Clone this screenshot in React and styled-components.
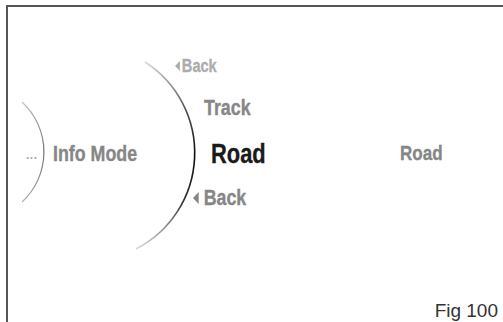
import React from 'react';
import styled, { createGlobalStyle } from 'styled-components';

const NARROW = 0.81;

const GlobalStyle = createGlobalStyle`
    html, body {
        margin: 0;
        padding: 0;
        background: #fff;
    }
`;

const Page = styled.div`
    position: relative;
    width: 503px;
    height: 322px;
    padding: 5px 0 0 6px;
    box-sizing: border-box;
    overflow: hidden;
    background: #fff;
`;

const Figure = styled.div`
    display: flex;
    flex-direction: column;
    height: 100%;
    border-top: 2px solid #555;
    border-left: 2px solid #555;
    box-sizing: border-box;
`;

const Arcs = styled.svg`
    position: absolute;
    top: 0;
    left: 0;
    pointer-events: none;
`;

const Stage = styled.div`
    display: grid;
    grid-template-columns: 27px 122px 225px auto;
    align-items: start;
    padding: 50px 0 0 18px;
`;

const Ellipsis = styled.div`
    margin-top: 92px;
    font-family: 'Liberation Sans', sans-serif;
    font-weight: 700;
    font-size: 12px;
    line-height: 1;
    letter-spacing: 0.5px;
    color: #aaa;
`;

// condensed bold face, narrowed from Liberation Sans Bold
const Label = styled.div`
    margin-top: ${p => p.top || 0}px;
    font-family: 'Liberation Sans', Arial, sans-serif;
    font-weight: 700;
    font-size: ${p => p.size}px;
    line-height: 1;
    color: ${p => p.color || '#868686'};
    -webkit-text-stroke: 0.35px currentColor;
    white-space: nowrap;
    transform: scaleX(${NARROW});
    transform-origin: left center;
`;

const Menu = styled.div`
    display: flex;
    flex-direction: column;
    align-items: flex-start;
`;

const MenuItem = styled(Label)`
    display: flex;
    align-items: center;
    gap: ${p => (p.gap || 0) / NARROW}px;
    margin-left: ${p => p.indent}px;
`;

const Arrow = styled.span`
    width: 0;
    height: 0;
    border-top: ${p => p.h / 2}px solid transparent;
    border-bottom: ${p => p.h / 2}px solid transparent;
    border-right: ${p => p.w / NARROW}px solid currentColor;
`;

const Caption = styled.div`
    margin-top: auto;
    margin-bottom: 2px;
    align-self: flex-end;
    padding-right: 5px;
    font-family: 'Liberation Sans', sans-serif;
    font-size: 19px;
    line-height: 1;
    color: #333;
`;

function ArcDrawing() {
    return (
        <Arcs width="503" height="322" viewBox="0 0 503 322">
            <defs>
                <linearGradient id="bigArc" gradientUnits="userSpaceOnUse" x1="0" y1="62" x2="0" y2="249">
                    <stop offset="0" stopColor="#d8d8d8" />
                    <stop offset="0.25" stopColor="#555" />
                    <stop offset="0.5" stopColor="#0d0d0d" />
                    <stop offset="0.75" stopColor="#333" />
                    <stop offset="1" stopColor="#d8d8d8" />
                </linearGradient>
                <linearGradient id="smallArc" gradientUnits="userSpaceOnUse" x1="0" y1="102" x2="0" y2="202">
                    <stop offset="0" stopColor="#c0c0c0" />
                    <stop offset="0.5" stopColor="#707070" />
                    <stop offset="1" stopColor="#b0b0b0" />
                </linearGradient>
            </defs>
            <path d="M145 62 A108 108 0 0 1 136 249" fill="none" stroke="url(#bigArc)" strokeWidth="1.6" />
            <path d="M22 102 A68 68 0 0 1 22 202" fill="none" stroke="url(#smallArc)" strokeWidth="1.2" />
        </Arcs>
    );
}

export default function App() {
    return (
        <>
            <GlobalStyle />
            <Page>
                <Figure>
                    <Stage>
                        <Ellipsis>...</Ellipsis>
                        <Label size={22} top={86}>Info Mode</Label>
                        <Menu>
                            <MenuItem indent={0} size={18} gap={2} color="#acacac">
                                <Arrow w={5} h={10} />
                                Back
                            </MenuItem>
                            <MenuItem indent={29} size={22} top={22} color="#868686">
                                Track
                            </MenuItem>
                            <MenuItem indent={36} size={27} top={22} color="#1a1a1a">
                                Road
                            </MenuItem>
                            <MenuItem indent={18} size={22} top={19} gap={5} color="#868686">
                                <Arrow w={6} h={12} />
                                Back
                            </MenuItem>
                        </Menu>
                        <Label size={21} top={85}>Road</Label>
                    </Stage>
                    <Caption>Fig 100</Caption>
                </Figure>
                <ArcDrawing />
            </Page>
        </>
    );
}
